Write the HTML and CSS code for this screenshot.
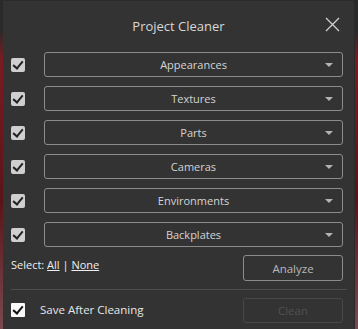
FILE: index.html
```html
<!DOCTYPE html>
<html lang="en">
<head>
  <meta charset="UTF-8" />
  <title>Project Cleaner</title>
  <link rel="stylesheet" href="styles.css">
</head>
<body>
  <div class="dialog">
    <header class="dialog-head">
      <h1>Project Cleaner</h1>
      <button class="close-btn" aria-label="Close">
        <svg width="15" height="15" viewBox="0 0 15 15"><path d="M1 1 L14 14 M14 1 L1 14" stroke="#cfcfcf" stroke-width="1.3" fill="none"/></svg>
      </button>
    </header>

    <div class="list">
      <div class="row"><span class="check"></span><div class="select">Appearances<i class="arrow"></i></div></div>
      <div class="row"><span class="check"></span><div class="select">Textures<i class="arrow"></i></div></div>
      <div class="row"><span class="check"></span><div class="select">Parts<i class="arrow"></i></div></div>
      <div class="row"><span class="check"></span><div class="select">Cameras<i class="arrow"></i></div></div>
      <div class="row"><span class="check"></span><div class="select">Environments<i class="arrow"></i></div></div>
      <div class="row"><span class="check"></span><div class="select">Backplates<i class="arrow"></i></div></div>
    </div>

    <div class="actions">
      <div class="select-links">Select: <a href="#">All</a> | <a href="#">None</a></div>
      <button class="btn">Analyze</button>
    </div>

    <hr class="divider">

    <div class="actions footer">
      <label class="save"><span class="check white"></span>Save After Cleaning</label>
      <button class="btn disabled">Clean</button>
    </div>
  </div>
</body>
</html>
```

FILE: styles.css
```css
* {
  margin: 0;
  padding: 0;
  box-sizing: border-box;
}

body {
  width: 358px;
  height: 329px;
  overflow: hidden;
  background: linear-gradient(180deg, #2a2a2a 0, #2a2a2a 30px, #7a1c22 60px, #5a1418 200px, #7a4a50 329px);
  font-family: 'Open Sans', 'Noto Sans', sans-serif;
  color: #d6d6d6;
}

.dialog {
  margin-left: 3px;
  width: 352px;
  height: 329px;
  background: #333333;
  border-top: 1px solid #2b2b2b;
  border-right: 1px solid #2a2a2a;
  display: flex;
  flex-direction: column;
}

.dialog-head {
  height: 51px;
  display: flex;
  align-items: center;
  justify-content: center;
  position: relative;
}

.dialog-head h1 {
  font-size: 13px;
  font-weight: 400;
  color: #d8d8d8;
  margin-top: -1px;
}

.close-btn {
  position: absolute;
  right: 14px;
  top: 16px;
  background: none;
  border: none;
  width: 15px;
  height: 15px;
  display: flex;
}

.list {
  display: flex;
  flex-direction: column;
  gap: 9px;
  padding: 0 11px 0 8px;
}

.row {
  display: flex;
  align-items: center;
  height: 25px;
  gap: 19px;
}

.check {
  flex: none;
  width: 14px;
  height: 14px;
  border-radius: 2px;
  background: #cfcfcf;
  position: relative;
}

.check::after {
  content: "";
  position: absolute;
  left: 4px;
  top: 1px;
  width: 4px;
  height: 8px;
  border: solid #222222;
  border-width: 0 2px 2px 0;
  transform: rotate(40deg);
}

.check.white {
  background: #fafafa;
  border-radius: 1px;
}

.check.white::after {
  border-color: #111;
}

.select {
  flex: 1;
  height: 25px;
  border: 1px solid #8c8c8c;
  border-radius: 3px;
  display: flex;
  align-items: center;
  justify-content: center;
  font-size: 11px;
  color: #d4d4d4;
  position: relative;
}

.arrow {
  position: absolute;
  right: 9px;
  top: 10px;
  width: 0;
  height: 0;
  border-left: 4px solid transparent;
  border-right: 4px solid transparent;
  border-top: 4px solid #b4b4b4;
}

.actions {
  display: flex;
  justify-content: space-between;
  align-items: center;
  padding: 0 11px 0 8px;
  margin-top: 8px;
}

.select-links {
  font-size: 11px;
  color: #eeeeee;
  margin-top: -8px;
}

.select-links a {
  color: #eeeeee;
  text-decoration: underline;
}

.btn {
  width: 100px;
  height: 26px;
  background: #333333;
  border: 1px solid #8c8c8c;
  border-radius: 3px;
  font-family: inherit;
  font-size: 11.5px;
  color: #b8b8b8;
}

.btn.disabled {
  height: 25px;
  border-color: #474747;
  color: #515151;
}

.divider {
  border: none;
  border-top: 1px solid #4e4e4e;
  margin: 8px 7px 0 8px;
}

.footer {
  margin-top: 8px;
}

.save {
  display: flex;
  align-items: center;
  gap: 15px;
  font-size: 11.5px;
  color: #e6e6e6;
  margin-top: -2px;
}
```
